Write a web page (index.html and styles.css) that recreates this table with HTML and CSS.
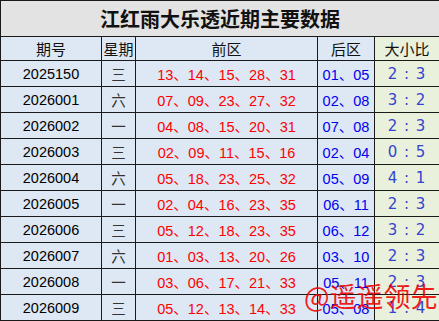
FILE: index.html
```html
<!DOCTYPE html>
<html lang="zh">
<head>
<meta charset="utf-8">
<link rel="stylesheet" href="styles.css">
</head>
<body>
<div class="wrap">
<table class="tbl">
<colgroup>
<col class="c1"><col class="c2"><col class="c3"><col class="c4"><col class="c5">
</colgroup>
<tr class="title"><td colspan="5">江红雨大乐透近期主要数据</td></tr>
<tr class="head"><td>期号</td><td>星期</td><td>前区</td><td>后区</td><td class="g">大小比</td></tr>
<tr><td>2025150</td><td class="wk">三</td><td class="r">13、14、15、28、31</td><td class="b">01、05</td><td class="g q">2 : 3</td></tr>
<tr><td>2026001</td><td class="wk">六</td><td class="r">07、09、23、27、32</td><td class="b">02、08</td><td class="g q">3 : 2</td></tr>
<tr><td>2026002</td><td class="wk">一</td><td class="r">04、08、15、20、31</td><td class="b">07、08</td><td class="g q">2 : 3</td></tr>
<tr><td>2026003</td><td class="wk">三</td><td class="r">02、09、11、15、16</td><td class="b">02、04</td><td class="g q">0 : 5</td></tr>
<tr><td>2026004</td><td class="wk">六</td><td class="r">05、18、23、25、32</td><td class="b">05、09</td><td class="g q">4 : 1</td></tr>
<tr><td>2026005</td><td class="wk">一</td><td class="r">02、04、16、23、35</td><td class="b">06、11</td><td class="g q">2 : 3</td></tr>
<tr><td>2026006</td><td class="wk">三</td><td class="r">05、12、18、23、35</td><td class="b">06、12</td><td class="g q">3 : 2</td></tr>
<tr><td>2026007</td><td class="wk">六</td><td class="r">01、03、13、20、26</td><td class="b">03、10</td><td class="g q">2 : 3</td></tr>
<tr><td>2026008</td><td class="wk">一</td><td class="r">03、06、17、21、33</td><td class="b">05、11</td><td class="g q">2 : 3</td></tr>
<tr><td>2026009</td><td class="wk">三</td><td class="r">05、12、13、14、33</td><td class="b">05、08</td><td class="g q">1 : 4</td></tr>
</table>
<div class="mark">@遥遥领先</div>
</div>
</body>
</html>
```
FILE: styles.css
```css
html, body {
  margin: 0;
  padding: 0;
  background: #ffffff;
}
.wrap {
  position: relative;
  width: 439px;
  height: 321px;
  overflow: hidden;
}
.tbl {
  border-collapse: collapse;
  table-layout: fixed;
  width: 439px;
  font-family: "Liberation Sans", "Noto Sans CJK SC", sans-serif;
  font-size: 14.5px;
  color: #000;
}
.c1 { width: 101px; }
.c2 { width: 34px; }
.c3 { width: 182px; }
.c4 { width: 57px; }
.c5 { width: 65px; }
.tbl td {
  border: 1px solid #1a1a1a;
  background: #dde8f4;
  text-align: center;
  padding: 0;
  height: 25px;
  white-space: nowrap;
}
.tbl tr.title td {
  background: #e3e3e3;
  font-size: 20px;
  font-weight: bold;
  height: 35px;
  color: #111;
}
.tbl tr.head td {
  height: 23px;
  font-size: 15px;
  color: #111;
}
.tbl td.g {
  background: #e9f1dd;
}
.wk {
  color: #333;
}
.r {
  color: #ff0000;
}
.b {
  color: #0000ee;
}
.tbl td.q {
  color: #3344cc;
  font-family: "DejaVu Sans", sans-serif;
  font-size: 15px;
  font-weight: normal;
  letter-spacing: 1px;
}
.mark {
  position: absolute;
  left: 304px;
  top: 280px;
  font-family: "Noto Sans CJK SC", sans-serif;
  font-size: 27px;
  line-height: 32px;
  color: rgba(240, 0, 0, 0.88);
}
```
